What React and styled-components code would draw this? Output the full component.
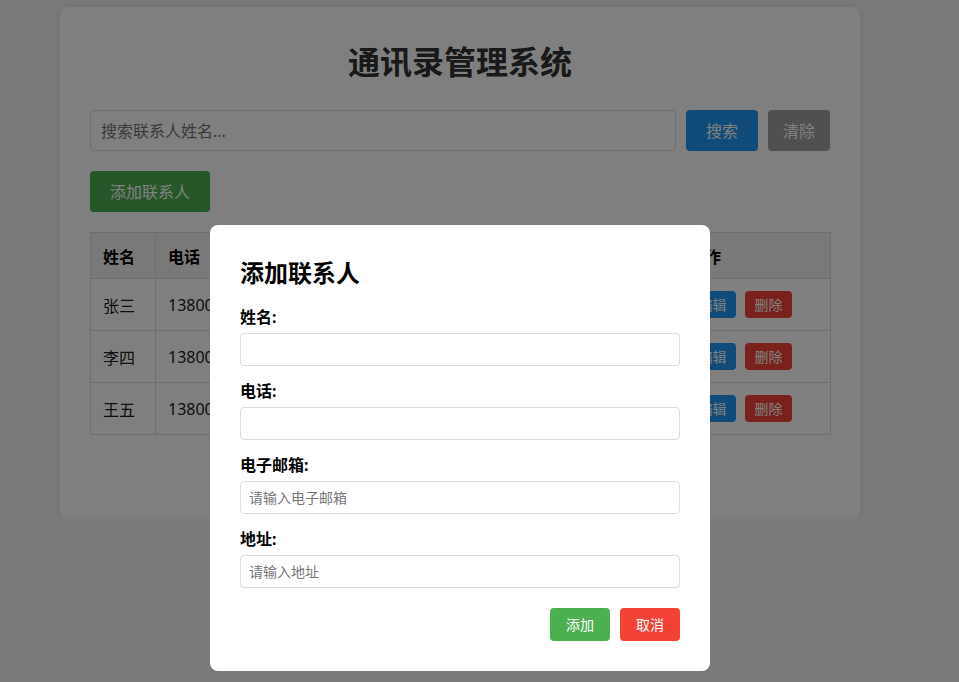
import React from "react";
import styled, { createGlobalStyle } from "styled-components";

const GlobalStyle = createGlobalStyle`
  * { box-sizing: border-box; }
  body {
    margin: 0;
    background: #f5f5f5;
    font-family: "Noto Sans", "Noto Sans CJK SC", sans-serif;
    color: #333;
  }
`;

const StPage = styled.div`
  padding-top: 7px;
  width: 920px;
`;

const StContainer = styled.div`
  width: 800px;
  margin: 0 auto;
  background: #fff;
  border-radius: 8px;
  box-shadow: 0 0 10px rgba(0, 0, 0, 0.1);
  padding: 35px 30px 84px;
`;

const StTitle = styled.h1`
  margin: 0 0 28px;
  text-align: center;
  font-size: 32px;
  line-height: 40px;
  font-weight: 700;
  color: #333;
`;

const StSearchBar = styled.div`
  display: flex;
  gap: 10px;
  margin-bottom: 20px;
`;

const StSearchInput = styled.input`
  flex: 1;
  height: 41px;
  padding: 0 10px;
  border: 1px solid #ddd;
  border-radius: 4px;
  font-family: inherit;
  font-size: 16px;
  &::placeholder { color: #757575; }
`;

const StButton = styled.button`
  height: ${(p) => p.$h || 41}px;
  padding: 0 ${(p) => p.$px || 20}px;
  border: none;
  border-radius: 4px;
  background: ${(p) => p.$bg};
  color: #fff;
  font-family: inherit;
  font-size: ${(p) => p.$fs || 16}px;
  line-height: 1;
  cursor: pointer;
  white-space: nowrap;
`;

const StToolbar = styled.div`
  margin-bottom: 20px;
`;

const StTable = styled.table`
  width: 740px;
  border-collapse: collapse;
  table-layout: fixed;
`;

const StTh = styled.th`
  width: ${(p) => p.$w}px;
  height: 46px;
  padding: 0 12px;
  border: 1px solid #ddd;
  background: #f2f2f2;
  text-align: left;
  font-size: 16px;
  font-weight: 700;
  color: #000;
`;

const StTd = styled.td`
  height: 52px;
  padding: 0 12px;
  border: 1px solid #ddd;
  font-size: 16px;
  color: #222;
  white-space: nowrap;
  overflow: hidden;
`;

const StActions = styled.div`
  display: flex;
  gap: 9px;
`;

const StOverlay = styled.div`
  position: fixed;
  inset: 0;
  background: rgba(0, 0, 0, 0.5);
  padding: 225px 0 0 210px;
`;

const StModal = styled.div`
  width: 500px;
  background: #fff;
  border-radius: 8px;
  padding: 30px;
`;

const StModalTitle = styled.h2`
  margin: 0 0 16px;
  font-size: 24px;
  line-height: 36px;
  font-weight: 700;
  color: #000;
`;

const StField = styled.div`
  margin-bottom: 15px;
`;

const StLabel = styled.label`
  display: block;
  margin-bottom: 5px;
  font-size: 16px;
  line-height: 21px;
  font-weight: 700;
  color: #000;
`;

const StInput = styled.input`
  display: block;
  width: 100%;
  height: 33px;
  padding: 0 8px;
  border: 1px solid #ddd;
  border-radius: 4px;
  font-family: inherit;
  font-size: 14px;
  &::placeholder { color: #777; }
`;

const StModalFooter = styled.div`
  display: flex;
  justify-content: flex-end;
  gap: 10px;
  margin-top: 20px;
`;

const contacts = [
  { name: "张三", phone: "13800138000", email: "zhangsan@example.com", address: "北京市朝阳区" },
  { name: "李四", phone: "13800138001", email: "lisi@example.com", address: "上海市浦东新区" },
  { name: "王五", phone: "13800138002", email: "wangwu@example.com", address: "广州市天河区" },
];

const fields = [
  { label: "姓名:", placeholder: "" },
  { label: "电话:", placeholder: "" },
  { label: "电子邮箱:", placeholder: "请输入电子邮箱" },
  { label: "地址:", placeholder: "请输入地址" },
];

export default function App() {
  return (
    <>
      <GlobalStyle />
      <StPage>
        <StContainer>
          <StTitle>通讯录管理系统</StTitle>
          <StSearchBar>
            <StSearchInput placeholder="搜索联系人姓名..." />
            <StButton $bg="#2196f3">搜索</StButton>
            <StButton $bg="#a0a0a0" $px={15}>清除</StButton>
          </StSearchBar>
          <StToolbar>
            <StButton $bg="#4caf50">添加联系人</StButton>
          </StToolbar>
          <StTable>
            <thead>
              <tr>
                <StTh $w={65}>姓名</StTh>
                <StTh $w={130}>电话</StTh>
                <StTh $w={210}>邮箱</StTh>
                <StTh $w={181}>地址</StTh>
                <StTh $w={154}>操作</StTh>
              </tr>
            </thead>
            <tbody>
              {contacts.map((c) => (
                <tr key={c.name}>
                  <StTd>{c.name}</StTd>
                  <StTd>{c.phone}</StTd>
                  <StTd>{c.email}</StTd>
                  <StTd>{c.address}</StTd>
                  <StTd>
                    <StActions>
                      <StButton $bg="#2196f3" $h={27} $px={9.5} $fs={14}>编辑</StButton>
                      <StButton $bg="#f44336" $h={27} $px={9.5} $fs={14}>删除</StButton>
                    </StActions>
                  </StTd>
                </tr>
              ))}
            </tbody>
          </StTable>
        </StContainer>
      </StPage>
      <StOverlay>
        <StModal>
          <StModalTitle>添加联系人</StModalTitle>
          {fields.map((f) => (
            <StField key={f.label}>
              <StLabel>{f.label}</StLabel>
              <StInput placeholder={f.placeholder} />
            </StField>
          ))}
          <StModalFooter>
            <StButton $bg="#4caf50" $h={33} $px={16} $fs={14}>添加</StButton>
            <StButton $bg="#f44336" $h={33} $px={16} $fs={14}>取消</StButton>
          </StModalFooter>
        </StModal>
      </StOverlay>
    </>
  );
}
